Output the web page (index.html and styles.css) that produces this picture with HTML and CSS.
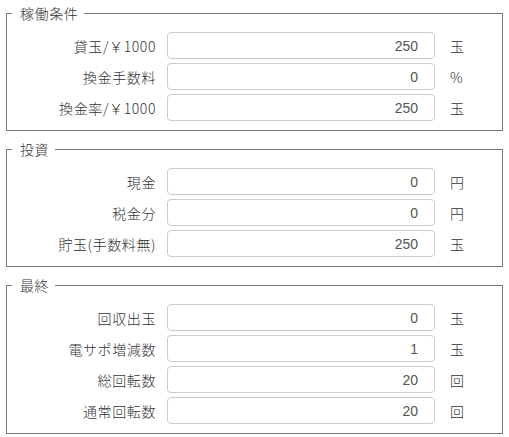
FILE: index.html
```html
<!DOCTYPE html>
<html lang="ja">
<head>
    <meta charset="UTF-8">
    <meta name="viewport" content="width=device-width, initial-scale=1.0">
    <title>稼働計算</title>
    <link rel="stylesheet" href="styles.css">
</head>
<body>
    <div class="page">
        <fieldset class="group">
            <legend>稼働条件</legend>
            <div class="rows">
                <label class="name">貸玉/￥1000</label>
                <input class="num" type="text" value="250">
                <span class="unit">玉</span>

                <label class="name">換金手数料</label>
                <input class="num" type="text" value="0">
                <span class="unit">%</span>

                <label class="name">換金率/￥1000</label>
                <input class="num" type="text" value="250">
                <span class="unit">玉</span>
            </div>
        </fieldset>

        <fieldset class="group">
            <legend>投資</legend>
            <div class="rows">
                <label class="name">現金</label>
                <input class="num" type="text" value="0">
                <span class="unit">円</span>

                <label class="name">税金分</label>
                <input class="num" type="text" value="0">
                <span class="unit">円</span>

                <label class="name">貯玉(手数料無)</label>
                <input class="num" type="text" value="250">
                <span class="unit">玉</span>
            </div>
        </fieldset>

        <fieldset class="group">
            <legend>最終</legend>
            <div class="rows">
                <label class="name">回収出玉</label>
                <input class="num" type="text" value="0">
                <span class="unit">玉</span>

                <label class="name">電サポ増減数</label>
                <input class="num" type="text" value="1">
                <span class="unit">玉</span>

                <label class="name">総回転数</label>
                <input class="num" type="text" value="20">
                <span class="unit">回</span>

                <label class="name">通常回転数</label>
                <input class="num" type="text" value="20">
                <span class="unit">回</span>
            </div>
        </fieldset>
    </div>
</body>
</html>
```

FILE: styles.css
```css
/* Page */
body {
    margin: 0;
    background: #fff;
    font-family: "Noto Sans CJK JP", "Noto Sans", sans-serif;
    font-size: 14px;
    font-weight: 300;
    color: #333;
}

.page {
    padding: 3px 6px 0;
}

/* Groups */
.group {
    margin: 0 0 8px;
    padding: 9px 0 9px;
    border: 1px solid #7a7a7a;
    min-width: 0;
}

.group legend {
    margin-left: 5px;
    padding: 0 6px 0 8px;
    line-height: 20px;
    letter-spacing: 0.6px;
    color: #333;
}

/* Rows */
.rows {
    display: grid;
    grid-template-columns: 149px 268px auto;
    column-gap: 11px;
    row-gap: 4px;
    align-items: center;
}

.name {
    text-align: right;
    line-height: 20px;
    letter-spacing: 0.6px;
    white-space: nowrap;
}

.num {
    box-sizing: border-box;
    height: 27px;
    width: 268px;
    margin: 0;
    padding: 0 16px 0 8px;
    border: 1px solid #ccc;
    border-radius: 4px;
    font-family: "Liberation Sans", Arial, sans-serif;
    font-size: 14px;
    color: #555;
    text-align: right;
    background: #fff;
}

.unit {
    padding-left: 4px;
    line-height: 20px;
}
```
